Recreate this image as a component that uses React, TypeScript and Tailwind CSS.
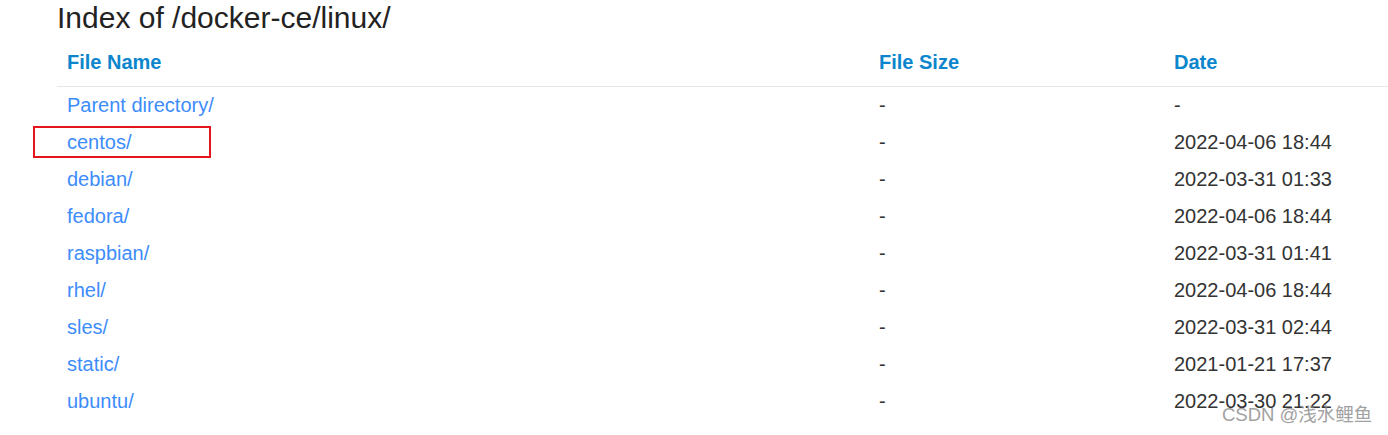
import React from 'react';

const rows = [
  { name: 'Parent directory/', size: '-', date: '-' },
  { name: 'centos/', size: '-', date: '2022-04-06 18:44', marked: true },
  { name: 'debian/', size: '-', date: '2022-03-31 01:33' },
  { name: 'fedora/', size: '-', date: '2022-04-06 18:44' },
  { name: 'raspbian/', size: '-', date: '2022-03-31 01:41' },
  { name: 'rhel/', size: '-', date: '2022-04-06 18:44' },
  { name: 'sles/', size: '-', date: '2022-03-31 02:44' },
  { name: 'static/', size: '-', date: '2021-01-21 17:37' },
  { name: 'ubuntu/', size: '-', date: '2022-03-30 21:22' },
];

export default function App() {
  return (
    <div className="relative w-[1388px] h-[435px] bg-white overflow-hidden font-['Liberation_Sans',Arial,sans-serif] text-[#333]">
      <h1 className="pl-[57px] pt-0 text-[30px] leading-[36px] text-[#222]">Index of /docker-ce/linux/</h1>

      <table className="ml-[57px] w-[1331px] border-collapse text-[20px]">
        <thead>
          <tr className="h-[50px] border-b border-[#e6e6e6]">
            <th className="w-[812px] pl-[10px] pt-[2px] text-left font-bold text-[#0b86cd]">File Name</th>
            <th className="w-[295px] pl-[10px] pt-[2px] text-left font-bold text-[#0b86cd]">File Size</th>
            <th className="pl-[10px] pt-[2px] text-left font-bold text-[#0b86cd]">Date</th>
          </tr>
        </thead>
        <tbody>
          {rows.map((row) => (
            <tr key={row.name} className="h-[37px]">
              <td className="pl-[10px]">
                <span className="relative inline-block">
                  <a href="#" className="text-[#3d8cfb]">{row.name}</a>
                  {row.marked && (
                    <span className="absolute left-[-34px] top-[-1px] w-[178px] h-[32px] border-2 border-[#e5151d]" />
                  )}
                </span>
              </td>
              <td className="pl-[10px]">{row.size}</td>
              <td className="pl-[10px]">{row.date}</td>
            </tr>
          ))}
        </tbody>
      </table>

      <div className="absolute left-[1222px] top-[404px] text-[18.5px] leading-[22px] text-[#8a8a8a] opacity-80 font-['Liberation_Sans','Noto_Sans_CJK_SC',sans-serif]">
        CSDN @浅水鲤鱼
      </div>
    </div>
  );
}
